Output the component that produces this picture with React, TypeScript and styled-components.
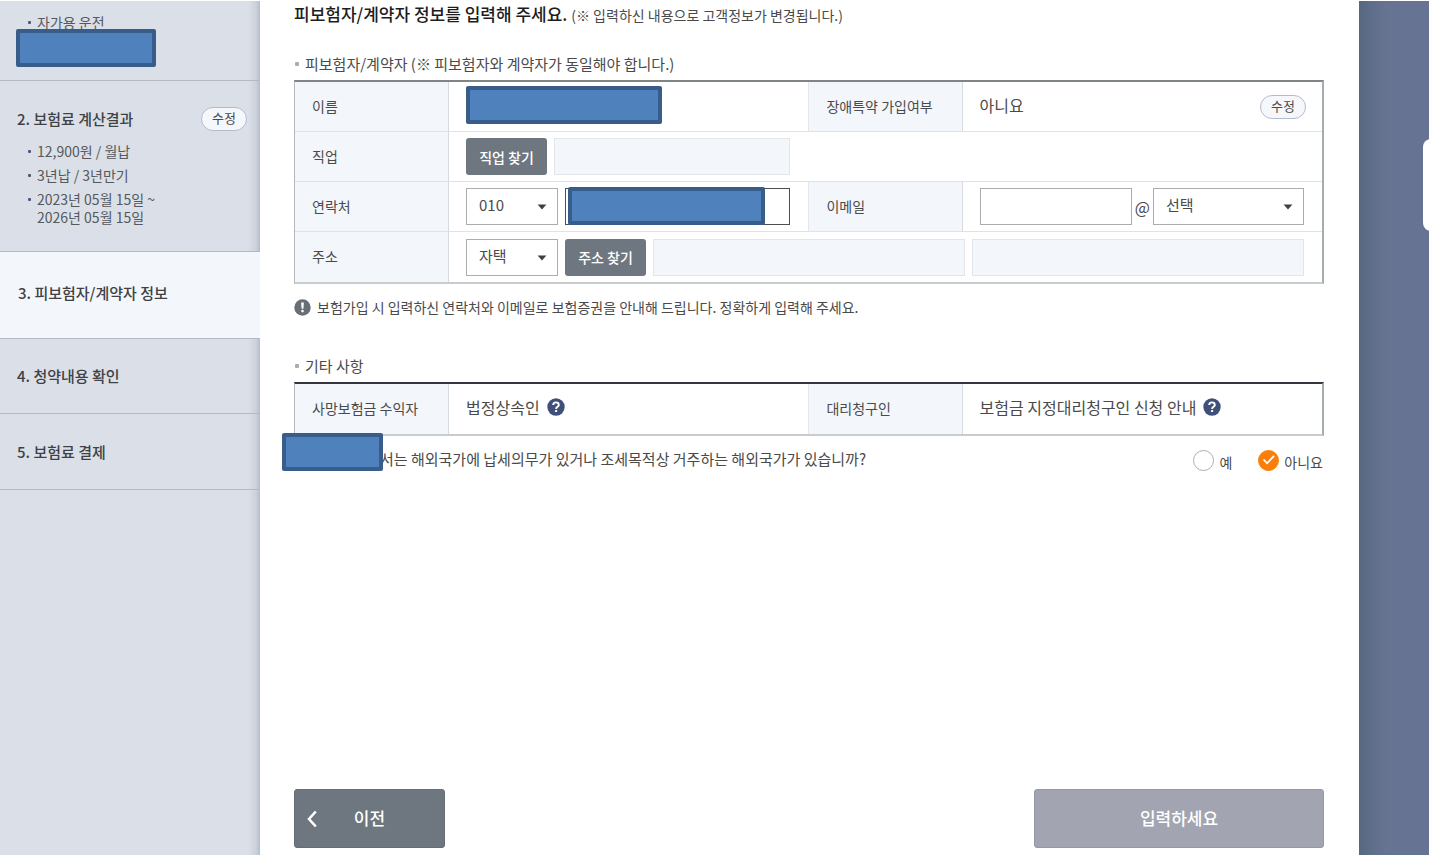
import React, { useState } from 'react';
import styled, { createGlobalStyle } from 'styled-components';

const GlobalStyle = createGlobalStyle`
  * { box-sizing: border-box; }
  body {
    margin: 0;
    background: #fff;
    color: #4a4a4a;
    font-family: "Noto Sans CJK KR", "Noto Sans", sans-serif;
    font-size: 14px;
    line-height: 20px;
  }
  button, input, select { font: inherit; color: inherit; margin: 0; }
`;

const Page = styled.div`
  display: grid;
  grid-template-columns: 260px minmax(0, 1fr) 70px;
  min-height: calc(100vh - 8px);
  padding-top: 1px;
  margin-bottom: 8px;
`;

/* ---------- side steps ---------- */

const Sidebar = styled.nav`
  background: linear-gradient(to left, #b4bdc9 0, #cbd2db 4px, #dbe0e8 12px);
`;

const Step = styled.section<{ $height: number; $active?: boolean }>`
  display: flex;
  flex-direction: column;
  justify-content: center;
  min-height: ${(p) => p.$height}px;
  padding: ${(p) => (p.$active ? '0 13px 4px 18px' : '0 13px 0 17px')};
  border-bottom: 1px solid #b3bac4;
  background: ${(p) => (p.$active ? '#f3f7fc' : 'transparent')};
`;

const StepHead = styled.div`
  display: flex;
  align-items: center;
  justify-content: space-between;
  padding-top: 6px;
`;

const StepTitle = styled.h2`
  margin: 0;
  font-size: 15px;
  line-height: 24px;
  font-weight: 500;
  color: #3f4145;
`;

const Facts = styled.ul`
  list-style: none;
  margin: 11px 0 0;
  padding: 0 0 0 11px;
`;

const Fact = styled.li`
  display: flex;
  align-items: flex-start;
  gap: 6px;
  margin-bottom: 6px;
  line-height: 18px;
  color: #55585d;

  &::before {
    content: '';
    flex: none;
    width: 3px;
    height: 3px;
    margin-top: 8px;
    border-radius: 1px;
    background: #4b5b7c;
  }
`;

const Mask = styled.div<{ $width: number }>`
  width: ${(p) => p.$width}px;
  height: 38px;
  border: 4px solid #385d8a;
  border-radius: 2px;
  background: #4f81bd;
`;

const FirstStep = styled(Step)`
  justify-content: flex-start;
  padding-top: 12px;
  padding-left: 16px;

  ${Facts} { margin: 0; padding-left: 12px; }
  ${Fact} { margin: 0; }
  ${Mask} { margin-top: -2px; position: relative; }
`;

const PillButton = styled.button`
  height: 24px;
  padding: 0 10px 1px;
  border: 1px solid #b4bbd0;
  border-radius: 12px;
  background: #f5f7fb;
  font-size: 13px;
  line-height: 20px;
`;

/* ---------- form ---------- */

const Main = styled.main`
  display: flex;
  flex-direction: column;
  padding: 0 35px 7px 34px;
`;

const Heading = styled.h1`
  margin: 0;
  font-size: 17px;
  line-height: 26px;
  font-weight: 500;
  color: #1c1c1c;

  small { font-size: 14px; font-weight: 400; color: #4a4a4a; }
`;

const SectionTitle = styled.h2<{ $top: number }>`
  display: flex;
  align-items: center;
  gap: 6px;
  margin: ${(p) => p.$top}px 0 4px;
  padding-left: 1px;
  font-size: 15px;
  line-height: 24px;
  font-weight: 400;

  &::before {
    content: '';
    width: 4px;
    height: 4px;
    border-radius: 1px;
    background: #a8adb0;
  }
`;

const Table = styled.table<{ $dark?: boolean }>`
  width: 100%;
  table-layout: fixed;
  border-collapse: separate;
  border-spacing: 0;
  border: solid;
  border-width: 2px 2px 2px 1px;
  border-color: ${(p) => (p.$dark ? '#33363e' : '#7f8586')} #a5adb0 #c9cccf #b4b9be;
`;

const Row = styled.tr`
  &:not(:last-child) > * { border-bottom: 1px solid #dfe3e6; }
`;

const Label = styled.th`
  height: 50px;
  padding: 0 16px 2px 17px;
  border-right: 1px solid #d6dbe1;
  background: #f3f6fb;
  font-weight: 400;
  text-align: left;

  td + & { border-left: 1px solid #e3e7ec; }
`;

const Cell = styled.td`
  height: 50px;
  padding: 0 16px 0 17px;
`;

const Line = styled.div<{ $between?: boolean; $raised?: boolean }>`
  display: flex;
  align-items: center;
  gap: 7px;
  justify-content: ${(p) => (p.$between ? 'space-between' : 'flex-start')};
  padding-bottom: ${(p) => (p.$raised ? '4px' : '0')};
`;

const Value = styled.span`
  font-size: 16px;
  line-height: 24px;
`;

const SmallButton = styled.button`
  flex: none;
  width: 81px;
  height: 37px;
  padding: 0;
  border: 0;
  border-radius: 3px;
  background: #6e777f;
  color: #fff;
  font-weight: 500;
`;

const Field = styled.input<{ $strong?: boolean; $share?: number }>`
  flex: ${(p) => p.$share ?? 1} 1 0;
  min-width: 0;
  width: 100%;
  height: 37px;
  padding: 0 10px;
  border: 1px solid ${(p) => (p.$strong ? '#4c4f52' : '#a9adb0')};
  background: #fff;

  &:read-only { border-color: #e2e5e9; background: #f3f6fb; }
`;

const SelectBox = styled.div<{ $width: number }>`
  position: relative;
  flex: none;
  width: ${(p) => p.$width}px;

  select {
    display: block;
    width: 100%;
    height: 37px;
    padding: 0 12px 3px;
    border: 1px solid #a9adb0;
    border-radius: 0;
    background: #fff;
    font-size: 15px;
    appearance: none;
  }

  svg {
    position: absolute;
    right: 11px;
    top: 16px;
    pointer-events: none;
  }
`;

const PhoneField = styled.div`
  position: relative;
  display: flex;
  flex: 1;

  ${Mask} { position: absolute; left: 3px; top: -1px; }
`;

const ControlLine = styled(Line)`
  padding-right: 2px;
`;

const EmailLine = styled(ControlLine)`
  gap: 3px;
  font-size: 16px;
`;

const Notice = styled.p`
  display: flex;
  align-items: center;
  gap: 6px;
  margin: 11px 0 0;
  line-height: 24px;
`;

const HelpButton = styled.button`
  display: flex;
  padding: 0;
  border: 0;
  background: none;
`;

const Question = styled.fieldset`
  position: relative;
  display: flex;
  align-items: center;
  justify-content: space-between;
  margin: 10px 0 0;
  padding: 0 0 0 86px;
  border: 0;
  font-size: 15px;
  line-height: 26px;

  > span { padding-bottom: 2px; }
  > ${Mask} { position: absolute; left: -12px; top: -13px; }
`;

const Choices = styled.div`
  display: flex;
  gap: 26px;
  padding-right: 1px;
`;

const Choice = styled.label`
  position: relative;
  display: flex;
  align-items: center;
  gap: 5px;
  font-size: 14px;

  input {
    appearance: none;
    width: 21px;
    height: 21px;
    border: 1px solid #a9adb0;
    border-radius: 50%;
    background: #fff;
  }
  input:checked { border-color: #f5820a; background: #f97f0a; }
  svg { position: absolute; left: 4px; top: 7px; pointer-events: none; }
  span { padding-top: 4px; line-height: 24px; }
`;

const Actions = styled.div`
  display: flex;
  justify-content: space-between;
  margin-top: auto;
  padding-top: 24px;
`;

const ActionButton = styled.button<{ $width: number; $muted?: boolean }>`
  display: flex;
  align-items: center;
  justify-content: center;
  position: relative;
  width: ${(p) => p.$width}px;
  height: 59px;
  padding: 0 0 2px;
  border: 1px solid ${(p) => (p.$muted ? '#9599a6' : '#656e76')};
  border-radius: 3px;
  background: ${(p) => (p.$muted ? '#a2a5b1' : '#6e777f')};
  color: #fff;
  font-size: 17px;
  line-height: 24px;
  font-weight: 500;

  svg { position: absolute; left: 11px; top: 20px; }
`;

const Backdrop = styled.div`
  position: relative;
  overflow: hidden;
  background: linear-gradient(to right, #56677f 0, #5f6e8a 12px, #667392 28px);
`;

const SideTab = styled.div`
  position: absolute;
  top: 138px;
  right: -10px;
  width: 16px;
  height: 92px;
  border-radius: 8px;
  background: #fff;
`;

const Caret = () => (
  <svg width="10" height="6" viewBox="0 0 10 6" aria-hidden="true">
    <path d="M0.6 0.6h8.8L5 5.4z" fill="#3d3f42" />
  </svg>
);

const Help = ({ label }: { label: string }) => (
  <HelpButton type="button" aria-label={label}>
    <svg width="18" height="18" viewBox="0 0 18 18" aria-hidden="true">
      <circle cx="9" cy="9" r="8.7" fill="#40507a" />
      <path d="M6.2 7.1C6.2 5.4 7.4 4.4 9 4.4s2.8 1 2.8 2.5c0 1.9-2.7 2-2.7 4" fill="none" stroke="#fff" strokeWidth="1.9" />
      <rect x="8" y="12" width="2.1" height="2.1" rx="0.4" fill="#fff" />
    </svg>
  </HelpButton>
);

const Columns = () => (
  <colgroup>
    <col style={{ width: '15%' }} />
    <col style={{ width: '35%' }} />
    <col style={{ width: '15%' }} />
    <col style={{ width: '35%' }} />
  </colgroup>
);

export default function App() {
  const [abroad, setAbroad] = useState('no');

  return (
    <>
      <GlobalStyle />
      <Page>
        <Sidebar>
          <FirstStep $height={80}>
            <Facts><Fact>자가용 운전</Fact></Facts>
            <Mask $width={140} />
          </FirstStep>
          <Step $height={171}>
            <StepHead>
              <StepTitle>2. 보험료 계산결과</StepTitle>
              <PillButton type="button">수정</PillButton>
            </StepHead>
            <Facts>
              <Fact>12,900원 / 월납</Fact>
              <Fact>3년납 / 3년만기</Fact>
              <Fact><span>2023년 05월 15일 ~<br />2026년 05월 15일</span></Fact>
            </Facts>
          </Step>
          <Step $height={87} $active>
            <StepTitle>3. 피보험자/계약자 정보</StepTitle>
          </Step>
          <Step $height={75}>
            <StepTitle>4. 청약내용 확인</StepTitle>
          </Step>
          <Step $height={76}>
            <StepTitle>5. 보험료 결제</StepTitle>
          </Step>
        </Sidebar>

        <Main>
          <Heading>
            피보험자/계약자 정보를 입력해 주세요. <small>(※ 입력하신 내용으로 고객정보가 변경됩니다.)</small>
          </Heading>

          <SectionTitle $top={24}>피보험자/계약자 (※ 피보험자와 계약자가 동일해야 합니다.)</SectionTitle>
          <Table>
            <Columns />
            <tbody>
              <Row>
                <Label scope="row">이름</Label>
                <Cell><Line $raised><Mask $width={196} /></Line></Cell>
                <Label scope="row">장애특약 가입여부</Label>
                <Cell>
                  <Line $between>
                    <Line $raised><Value>아니요</Value></Line>
                    <PillButton type="button">수정</PillButton>
                  </Line>
                </Cell>
              </Row>
              <Row>
                <Label scope="row">직업</Label>
                <Cell>
                  <ControlLine>
                    <SmallButton type="button">직업 찾기</SmallButton>
                    <Field aria-label="직업" readOnly />
                  </ControlLine>
                </Cell>
                <Cell colSpan={2} />
              </Row>
              <Row>
                <Label scope="row">연락처</Label>
                <Cell>
                  <ControlLine>
                    <SelectBox $width={92}>
                      <select aria-label="연락처 앞자리"><option>010</option></select>
                      <Caret />
                    </SelectBox>
                    <PhoneField>
                      <Field aria-label="연락처" $strong />
                      <Mask $width={197} />
                    </PhoneField>
                  </ControlLine>
                </Cell>
                <Label scope="row">이메일</Label>
                <Cell>
                  <EmailLine>
                    <Field aria-label="이메일 아이디" />
                    @
                    <SelectBox $width={151}>
                      <select aria-label="이메일 도메인"><option>선택</option></select>
                      <Caret />
                    </SelectBox>
                  </EmailLine>
                </Cell>
              </Row>
              <Row>
                <Label scope="row">주소</Label>
                <Cell colSpan={3}>
                  <ControlLine>
                    <SelectBox $width={92}>
                      <select aria-label="주소 구분"><option>자택</option></select>
                      <Caret />
                    </SelectBox>
                    <SmallButton type="button">주소 찾기</SmallButton>
                    <Field aria-label="주소" $share={15} readOnly />
                    <Field aria-label="상세 주소" $share={16} readOnly />
                  </ControlLine>
                </Cell>
              </Row>
            </tbody>
          </Table>

          <Notice>
            <svg width="17" height="17" viewBox="0 0 17 17" aria-hidden="true">
              <circle cx="8.5" cy="8.5" r="8.2" fill="#666e76" />
              <path d="M7.1 3.6h2.8l-.5 6.1H7.6z" fill="#fff" />
              <circle cx="8.5" cy="12.1" r="1.3" fill="#fff" />
            </svg>
            보험가입 시 입력하신 연락처와 이메일로 보험증권을 안내해 드립니다. 정확하게 입력해 주세요.
          </Notice>

          <SectionTitle $top={35}>기타 사항</SectionTitle>
          <Table $dark>
            <Columns />
            <tbody>
              <Row>
                <Label scope="row">사망보험금 수익자</Label>
                <Cell>
                  <Line $raised><Value>법정상속인</Value><Help label="법정상속인 도움말" /></Line>
                </Cell>
                <Label scope="row">대리청구인</Label>
                <Cell>
                  <Line $raised><Value>보험금 지정대리청구인 신청 안내</Value><Help label="지정대리청구인 도움말" /></Line>
                </Cell>
              </Row>
            </tbody>
          </Table>

          <Question>
            <Mask $width={101} />
            <span>서는 해외국가에 납세의무가 있거나 조세목적상 거주하는 해외국가가 있습니까?</span>
            <Choices>
              <Choice>
                <input type="radio" name="abroad" checked={abroad === 'yes'} onChange={() => setAbroad('yes')} />
                <span>예</span>
              </Choice>
              <Choice>
                <input type="radio" name="abroad" checked={abroad === 'no'} onChange={() => setAbroad('no')} />
                {abroad === 'no' && (
                  <svg width="14" height="13" viewBox="0 0 14 13" aria-hidden="true">
                    <path d="M1.5 6.5l3.6 3.8L12 2.8" fill="none" stroke="#fff" strokeWidth="1.8" />
                  </svg>
                )}
                <span>아니요</span>
              </Choice>
            </Choices>
          </Question>

          <Actions>
            <ActionButton type="button" $width={151}>
              <svg width="12" height="18" viewBox="0 0 12 18" aria-hidden="true">
                <path d="M9.8 1.5L3 9l6.8 7.5" fill="none" stroke="#fff" strokeWidth="2.6" />
              </svg>
              이전
            </ActionButton>
            <ActionButton type="button" $width={290} $muted>입력하세요</ActionButton>
          </Actions>
        </Main>

        <Backdrop>
          <SideTab />
        </Backdrop>
      </Page>
    </>
  );
}
